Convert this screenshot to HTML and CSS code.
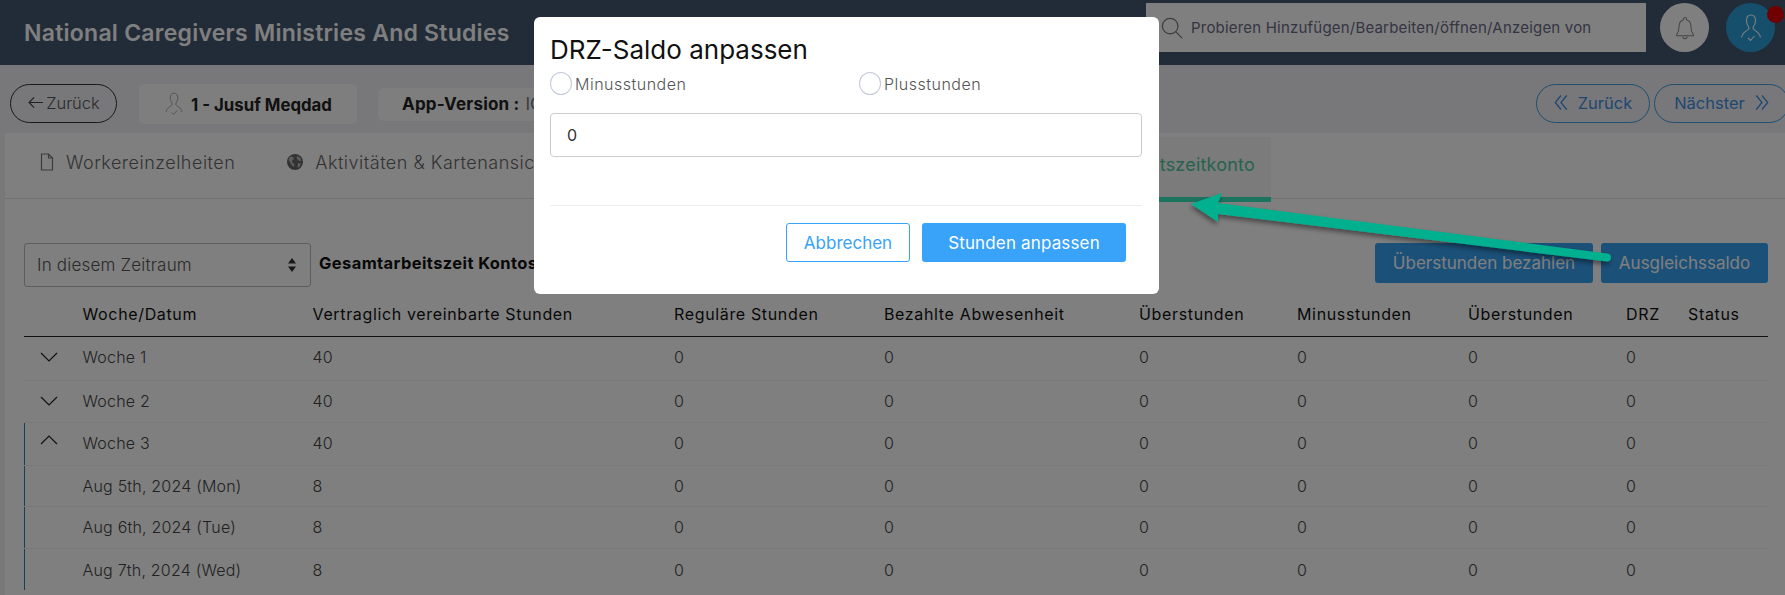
FILE: index.html
```html
<!DOCTYPE html>
<html lang="de">
<head>
<meta charset="utf-8">
<title>DRZ-Saldo anpassen</title>
<link rel="stylesheet" href="styles.css">
</head>
<body>
<div class="page">
  <header class="topbar">
    <div class="brand">National Caregivers Ministries And Studies</div>
    <div class="search">
      <svg class="search-icon" viewBox="0 0 24 24"><circle cx="10" cy="10" r="8.500"/><path d="M16 16l7 7"/></svg>
      <span>Probieren Hinzufügen/Bearbeiten/öffnen/Anzeigen von</span>
    </div>
    <div class="round bell">
      <svg viewBox="0 0 24 28"><path d="M12 2.500c-1 0-1.600.7-1.600 1.700v.8C6.800 6 5.500 9 5.500 12.500c0 4-.8 6.500-2.500 8.500v1.500h18V21c-1.700-2-2.500-4.500-2.500-8.500 0-3.500-1.300-6.500-4.900-7.500v-.8c0-1-.6-1.700-1.600-1.700z"/><path d="M9.500 23.500c.3 1.500 1.300 2.300 2.500 2.300s2.200-.8 2.500-2.300"/></svg>
    </div>
    <div class="round avatar">
      <svg viewBox="0 0 24 30"><path d="M12 2c-3 0-4.500 2.400-4.500 5.500 0 3 1 5 2.200 6.300v2.200C8 18 3.500 19 2.500 24.500M12 2c3 0 4.500 2.400 4.500 5.500 0 3-1 5-2.200 6.300v2.200c1.700 2 6.200 3 7.200 8.500M9 25l2.500 2.500L15.500 23"/></svg>
      <span class="dot"></span>
    </div>
  </header>

  <div class="subbar">
    <button class="pill back"><svg viewBox="0 0 18 14"><path d="M17 7H2M7.500 1.500L2 7l5.500 5.500"/></svg>Zurück</button>
    <div class="chip user">
      <svg viewBox="0 0 24 30"><path d="M12 2c-3 0-4.500 2.400-4.500 5.500 0 3 1 5 2.200 6.300v2.200C8 18 3.500 19 2.500 24.500M12 2c3 0 4.500 2.400 4.500 5.500 0 3-1 5-2.200 6.300v2.200c1.700 2 6.200 3 7.200 8.500M9 25l2.500 2.500L15.500 23"/></svg>
      <b>1 - Jusuf Meqdad</b>
    </div>
    <div class="chip version"><b>App-Version :</b> <span>IOS</span></div>
    <div class="pager">
      <button class="pill nav prev"><svg viewBox="0 0 16 18"><path d="M8 1L1.500 9 8 17M14.500 1L8 9l6.500 8"/></svg>Zurück</button>
      <button class="pill nav next">Nächster<svg viewBox="0 0 16 18"><path d="M8 1l6.500 8L8 17M1.500 1L8 9l-6.500 8"/></svg></button>
    </div>
  </div>

  <main class="panel">
    <nav class="tabs">
      <a class="tab tab-first">
        <svg class="file" viewBox="0 0 14 18"><path d="M1.500 1h7l4 4v12h-11zM8.500 1v4h4"/></svg>
        Workereinzelheiten
      </a>
      <a class="tab tab-second">
        <svg class="globe" viewBox="0 0 16 16"><circle cx="8" cy="8" r="8"/><path class="land" d="M3 2.500l3 .5 1 2-2 1.500.5 2.500 2 1-.5 3-2-1.500L3 8 1.500 6zM10 2l3 1.500 1.500 3-2 .5-1.500-1-1.500-2zM11 9l3 .5-1.500 3.500-2 .5z"/></svg>
        Aktivitäten &amp; Kartenansicht
      </a>
      <a class="tab tab-active">Arbeitszeitkonto</a>
    </nav>

    <div class="toolbar">
      <div class="select">In diesem Zeitraum
        <svg viewBox="0 0 10 16"><path d="M5 1l4 5.500H1zM5 15l4-5.500H1z"/></svg>
      </div>
      <b class="total">Gesamtarbeitszeit Kontostand</b>
      <div class="actions">
        <button class="solid pay">Überstunden bezahlen</button>
        <button class="solid balance">Ausgleichssaldo</button>
      </div>
    </div>

    <section class="table">
      <div class="row head"><span></span><span>Woche/Datum</span><span>Vertraglich vereinbarte Stunden</span><span>Reguläre Stunden</span><span>Bezahlte Abwesenheit</span><span>Überstunden</span><span>Minusstunden</span><span>Überstunden</span><span>DRZ</span><span>Status</span></div>
      <div class="row tall"><svg class="chev" viewBox="0 0 18 10"><path d="M1 1l8 8 8-8"/></svg><span>Woche 1</span><span>40</span><span>0</span><span>0</span><span>0</span><span>0</span><span>0</span><span>0</span><span></span></div>
      <div class="row"><svg class="chev" viewBox="0 0 18 10"><path d="M1 1l8 8 8-8"/></svg><span>Woche 2</span><span>40</span><span>0</span><span>0</span><span>0</span><span>0</span><span>0</span><span>0</span><span></span></div>
      <div class="row open mid"><svg class="chev up" viewBox="0 0 18 10"><path d="M1 9l8-8 8 8"/></svg><span>Woche 3</span><span>40</span><span>0</span><span>0</span><span>0</span><span>0</span><span>0</span><span>0</span><span></span></div>
      <div class="row open short"><span></span><span>Aug 5th, 2024 (Mon)</span><span>8</span><span>0</span><span>0</span><span>0</span><span>0</span><span>0</span><span>0</span><span></span></div>
      <div class="row open"><span></span><span>Aug 6th, 2024 (Tue)</span><span>8</span><span>0</span><span>0</span><span>0</span><span>0</span><span>0</span><span>0</span><span></span></div>
      <div class="row open short last"><span></span><span>Aug 7th, 2024 (Wed)</span><span>8</span><span>0</span><span>0</span><span>0</span><span>0</span><span>0</span><span>0</span><span></span></div>
    </section>
  </main>
</div>

<div class="overlay"></div>

<div class="modal">
  <h2>DRZ-Saldo anpassen</h2>
  <div class="radios">
    <label class="radio"><i></i>Minusstunden</label>
    <label class="radio"><i></i>Plusstunden</label>
  </div>
  <div class="input">0</div>
  <div class="modal-foot">
    <button class="btn ghost">Abbrechen</button>
    <button class="btn primary">Stunden anpassen</button>
  </div>
</div>

<svg class="arrow" viewBox="0 0 460 70" width="460" height="70">
  <defs><filter id="sh" x="-5%" y="-30%" width="110%" height="170%"><feDropShadow dx="-1" dy="3" stdDeviation="2.500" flood-color="#000" flood-opacity=".45"/></filter></defs>
  <g filter="url(#sh)">
    <path class="tip" d="M1 11L32 0 28 10 417 60.500a4 4 0 0 1 0 8L28 21 28 29z"/>
  </g>
</svg>
</body>
</html>
```

FILE: styles.css
```css
* { box-sizing: border-box; }
html, body { margin: 0; height: 100%; }
body {
  width: 1785px;
  height: 595px;
  overflow: hidden;
  position: relative;
  font-family: Inter, "Open Sans", "Liberation Sans", sans-serif;
  color: #444;
  background: #f0f0f7;
}
button { font: inherit; background: none; cursor: pointer; }
svg { display: block; fill: none; }

.topbar { height: 65px; background: #445670; display: flex; align-items: flex-start; padding-left: 24px; }
.brand { font-size: 23px; font-weight: 600; color: #fff; width: 1122px; line-height: 24px; margin-top: 21px; letter-spacing: .25px; }
.search { width: 500px; height: 49px; margin-top: 3px; background: #fff; display: flex; align-items: center; padding-left: 15px; gap: 8px; color: #6a6a85; font-size: 15px; letter-spacing: .2px; }
.search-icon { width: 22px; height: 22px; stroke: #777; stroke-width: 1.300; }
.round { width: 49px; height: 49px; border-radius: 50%; margin-top: 3px; display: flex; align-items: center; justify-content: center; position: relative; }
.bell { background: #fff; margin-left: 14px; }
.bell svg { width: 22px; height: 28px; stroke: #888; stroke-width: 1.100; }
.avatar { background: #2a9fd6; margin-left: 17px; }
.avatar svg { width: 24px; height: 30px; stroke: #fff; stroke-width: 1.100; }
.dot { position: absolute; width: 17px; height: 17px; border-radius: 50%; background: #e00000; top: 3px; right: -9px; }

.subbar { height: 68px; padding: 19px 0 0 10px; display: flex; align-items: flex-start; }
.pill { height: 39px; border-radius: 20px; border: 1px solid #333; font-size: 16.500px; color: #555; display: flex; align-items: center; justify-content: center; padding: 0 0 2px; }
.back { width: 107px; gap: 2px; font-weight: 300; }
.back svg { width: 17px; height: 13px; stroke: #444; stroke-width: 1.200; }
.chip { background: #fcfcfd; border-radius: 6px; display: flex; align-items: center; }
.user { width: 218px; height: 40px; margin-left: 22px; padding: 2px 0 0 25px; gap: 7px; }
.user svg { width: 20px; height: 28px; stroke: #999; stroke-width: 1; margin-top: -2px; }
.chip b { font-size: 16.800px; font-weight: 700; color: #222; }
.version { width: 300px; height: 33px; margin: 4px 0 0 21px; padding: 0 0 2px 24px; gap: 6px; }
.version b { font-size: 17px; letter-spacing: .2px; }
.version span { color: #777; font-size: 17px; }
.pager { margin-left: auto; display: flex; gap: 4px; }
.nav { border-color: #3d9fe0; color: #3f8fe0; width: 114px; gap: 10px; }
.nav svg { width: 14px; height: 17px; stroke: #3f8fe0; stroke-width: 1.500; }
.next { width: 135px; margin-right: -4px; }

.panel { margin-left: 5px; background: #fff; height: 462px; padding: 0 17px 0 19px; }
.tabs { margin: 0 -17px 0 -19px; height: 66px; border-bottom: 1px solid #e2e2e2; display: flex; align-items: flex-start; position: relative; }
.tab { font-size: 18px; letter-spacing: .5px; color: #666; font-weight: 300; display: flex; align-items: center; gap: 12px; height: 58px; }
.tab-first { margin-left: 35px; }
.file { width: 14px; height: 18px; stroke: #777; stroke-width: 1.200; }
.tab-second { margin-left: 52px; }
.globe { width: 16px; height: 16px; }
.globe circle { fill: #666; }
.globe .land { fill: #fff; opacity: .55; }
.tab-active { position: absolute; left: 960px; top: 4px; width: 306px; height: 65px; background: #f6f6f6; border-bottom: 5px solid #36e8bd; color: #4dc79e; justify-content: flex-end; padding: 0 16px 6px 0; letter-spacing: .2px; font-weight: 400; }

.toolbar { display: flex; align-items: flex-start; margin-top: 44px; height: 44px; }
.select { width: 287px; height: 44px; border: 1px solid #bbb; border-radius: 3px; display: flex; align-items: center; justify-content: space-between; padding: 0 13px 0 12px; font-size: 17px; letter-spacing: .2px; font-weight: 300; color: #555; }
.select svg { width: 10px; height: 16px; fill: #333; }
.total { margin: 10px 0 0 8px; font-size: 16.500px; letter-spacing: .4px; font-weight: 700; color: #111; white-space: nowrap; }
.actions { margin-left: auto; display: flex; gap: 8px; }
.solid { height: 40px; border: 0; border-radius: 3px; background: #37a0f0; color: #fff; font-size: 17px; padding: 0; }
.pay { width: 218px; }
.balance { width: 167px; }

.row {
  display: grid;
  grid-template-columns: 58.500px 230px 361.500px 210px 255px 158px 171px 158px 62px 80px;
  height: 42px;
  padding-bottom: 2px;
  align-items: center;
  border-bottom: 1px solid #f3f3f3;
  font-size: 16px;
  letter-spacing: .2px;
  font-weight: 300;
  color: #444;
  white-space: nowrap;
}
.head { height: 50px; padding: 7px 0 3px; border-bottom: 1px solid #222; font-weight: 400; color: #111; letter-spacing: .65px; }
.tall { height: 44px; padding-bottom: 3px; }
.mid { height: 43px; }
.short { height: 41px; padding-bottom: 0; }
.open { box-shadow: inset 1px 0 0 #2f7fc0; }
.last { border-bottom: 0; }
.chev { width: 18px; height: 10px; margin-left: 16px; stroke: #222; stroke-width: 1.200; }
.up { margin-top: -6px; }

.overlay { position: absolute; inset: 0; background: rgba(0, 0, 0, .5); }

.modal { position: absolute; left: 534px; top: 17px; width: 625px; height: 277px; background: #fff; border-radius: 6px; padding: 18px 17px 0 16px; color: #222; }
.modal h2 { margin: 0; font-size: 26px; font-weight: 400; color: #111; line-height: 30px; }
.radios { display: flex; margin-top: 7px; height: 23px; margin-bottom: 18px; }
.radio { width: 309px; flex: none; display: flex; align-items: center; gap: 3px; font-size: 16px; letter-spacing: .5px; font-weight: 300; color: #555; }
.radio i { width: 22px; height: 23px; border-radius: 50%; border: 1px solid #c4c9d8; background: #fff; flex: none; }
.input { height: 44px; border: 1px solid #ccc; border-radius: 4px; display: flex; align-items: center; padding-left: 16px; font-size: 16px; color: #333; }
.modal-foot { margin-top: 48px; border-top: 1px solid #eee; padding: 17px 16px 0 0; display: flex; justify-content: flex-end; gap: 12px; }
.btn { height: 39px; border-radius: 3px; font-size: 17px; }
.ghost { width: 124px; border: 1px solid #38a3f8; color: #38a3f8; background: #fff; }
.primary { width: 204px; border: 0; background: #38a3f8; color: #fff; letter-spacing: .15px; }

.arrow { position: absolute; left: 1190px; top: 193px; overflow: visible; }
.tip { fill: #05b08f; }
```
